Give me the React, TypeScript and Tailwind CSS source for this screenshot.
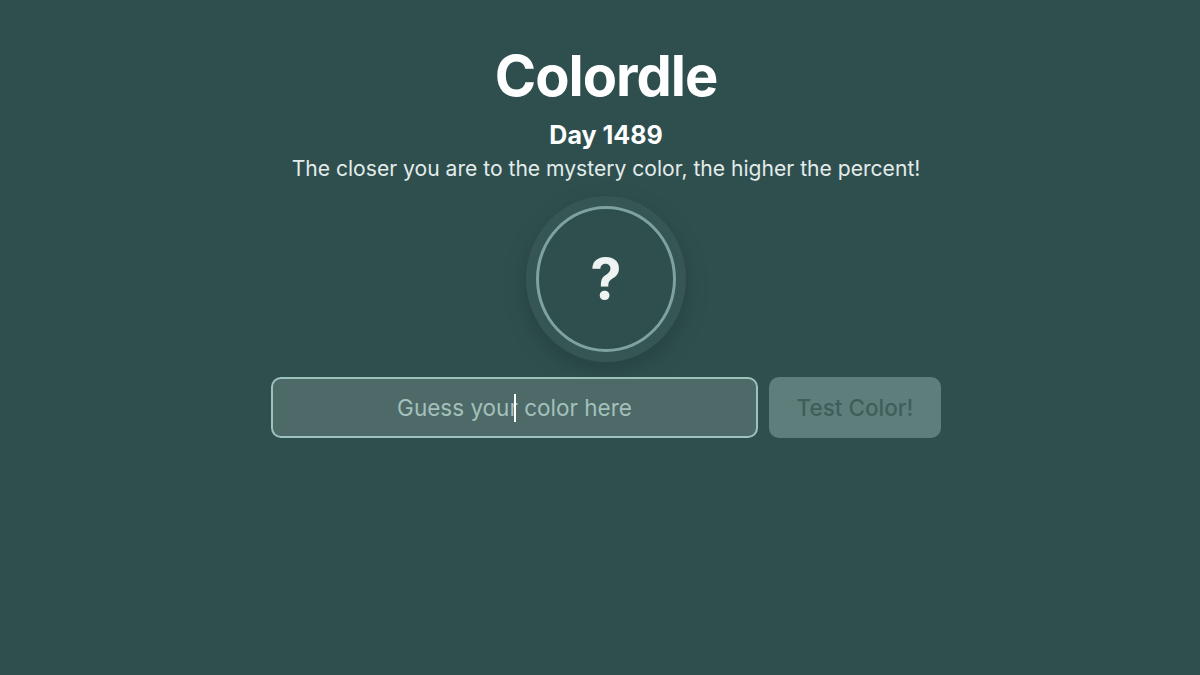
export default function App() {
  return (
    <div
      className="min-h-screen w-full bg-[#2f4f4f] flex flex-col items-center pl-[12px] text-white"
      style={{ fontFamily: 'Inter, "Noto Sans", sans-serif' }}
    >
      <h1 className="mt-[42px] text-[56px] leading-[68px] font-bold tracking-[-1px]">Colordle</h1>
      <div className="mt-[10px] text-[25px] leading-[30px] font-bold">Day 1489</div>
      <p className="mt-[5px] text-[21.1px] leading-[28px] text-[#e3ecea]">
        The closer you are to the mystery color, the higher the percent!
      </p>

      <div className="mt-[13px] rounded-[50%] bg-[#365656] p-[10px] shadow-[0_8px_24px_rgba(0,0,0,0.18)]">
        <div className="w-[140px] h-[146px] rounded-[50%] border-[3px] border-[#7ea29d] bg-[#2f4f4f] flex items-center justify-center">
          <span className="text-[56px] font-bold leading-none text-[#eef3f2]">?</span>
        </div>
      </div>

      <div className="mt-[15px] flex gap-[11px]">
        <div className="relative">
          <input
            className="w-[487px] h-[61px] rounded-[10px] border-2 border-[#9cc2bc] bg-[#4e6a68] text-center text-[22.5px] text-white outline-none placeholder:text-[#a3c0bb]"
            placeholder="Guess your color here"
          />
          <span className="absolute left-[243px] top-[17px] h-[28px] w-[1.5px] bg-white" />
        </div>
        <button className="w-[172px] h-[61px] rounded-[10px] bg-[#5e7e7b] text-[22.5px] font-medium text-[#3f5e5b]">
          Test Color!
        </button>
      </div>
    </div>
  );
}
